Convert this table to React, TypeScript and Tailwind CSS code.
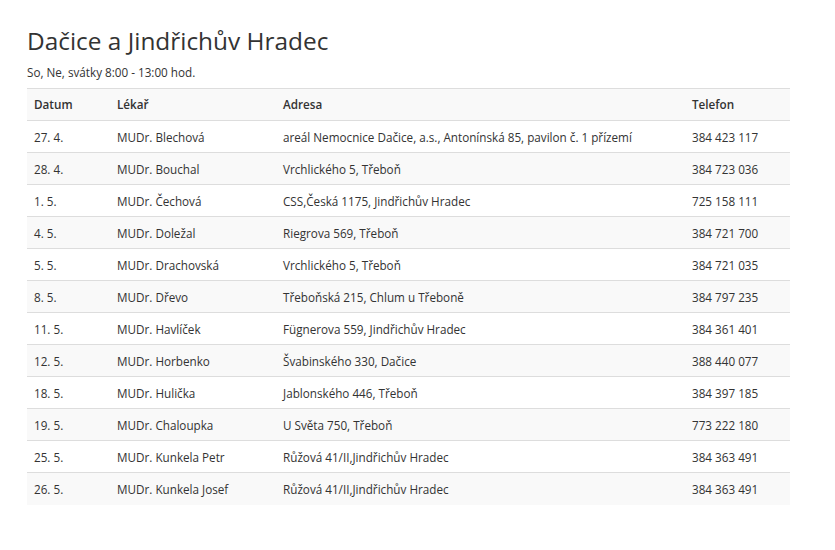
const rows = [
  ["27. 4.", "MUDr. Blechová", "areál Nemocnice Dačice, a.s., Antonínská 85, pavilon č. 1 přízemí", "384 423 117"],
  ["28. 4.", "MUDr. Bouchal", "Vrchlického 5, Třeboň", "384 723 036"],
  ["1. 5.", "MUDr. Čechová", "CSS,Česká 1175, Jindřichův Hradec", "725 158 111"],
  ["4. 5.", "MUDr. Doležal", "Riegrova 569, Třeboň", "384 721 700"],
  ["5. 5.", "MUDr. Drachovská", "Vrchlického 5, Třeboň", "384 721 035"],
  ["8. 5.", "MUDr. Dřevo", "Třeboňská 215, Chlum u Třeboně", "384 797 235"],
  ["11. 5.", "MUDr. Havlíček", "Fügnerova 559, Jindřichův Hradec", "384 361 401"],
  ["12. 5.", "MUDr. Horbenko", "Švabinského 330, Dačice", "388 440 077"],
  ["18. 5.", "MUDr. Hulička", "Jablonského 446, Třeboň", "384 397 185"],
  ["19. 5.", "MUDr. Chaloupka", "U Světa 750, Třeboň", "773 222 180"],
  ["25. 5.", "MUDr. Kunkela Petr", "Růžová 41/II,Jindřichův Hradec", "384 363 491"],
  ["26. 5.", "MUDr. Kunkela Josef", "Růžová 41/II,Jindřichův Hradec", "384 363 491"],
];

export default function App() {
  return (
    <div className="min-h-[550px] bg-white px-[27px] pt-[25px] font-['Open_Sans',sans-serif] text-[#333]">
      <h1 className="text-[24.4px] leading-[32px] font-normal">Dačice a Jindřichův Hradec</h1>
      <p className="mt-[5px] text-[11.7px] leading-[20px]">So, Ne, svátky 8:00 - 13:00 hod.</p>
      <table className="mt-[6px] w-[763px] table-fixed border-collapse text-[11.7px]">
        <colgroup>
          <col className="w-[83px]" />
          <col className="w-[166px]" />
          <col className="w-[409px]" />
          <col className="w-[105px]" />
        </colgroup>
        <thead>
          <tr className="h-[32px] border-t border-[#ddd] bg-[#f9f9f9]">
            <th className="px-[7px] text-left font-semibold">Datum</th>
            <th className="px-[7px] text-left font-semibold">Lékař</th>
            <th className="px-[7px] text-left font-semibold">Adresa</th>
            <th className="px-[7px] text-left font-semibold">Telefon</th>
          </tr>
        </thead>
        <tbody>
          {rows.map((r, i) => (
            <tr key={i} className={`h-[32px] border-t border-[#ddd] ${i % 2 === 1 ? "bg-[#f9f9f9]" : "bg-white"}`}>
              {r.map((c, j) => (
                <td key={j} className="px-[7px] pt-[2px] whitespace-nowrap">{c}</td>
              ))}
            </tr>
          ))}
        </tbody>
      </table>
    </div>
  );
}
